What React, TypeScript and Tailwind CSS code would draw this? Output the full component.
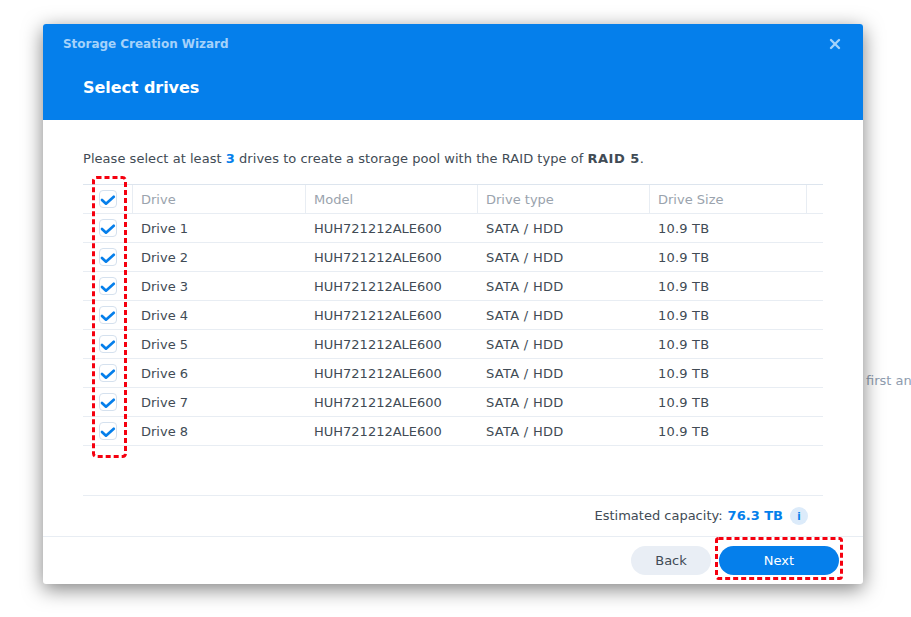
import React from "react";
import { X } from "lucide-react";

const drives = [1, 2, 3, 4, 5, 6, 7, 8];
const cols = "grid grid-cols-[50px_173px_172px_172px_157px_16px]";

const Check = () => (
  <div className="flex h-[18px] w-[18px] items-center justify-center rounded-[4px] border border-[#d5e1ee] bg-white">
    <svg width="16" height="14" viewBox="0 0 16 14" fill="none">
      <path d="M2 8 L6 11.7 L13.8 4.8" stroke="#057feb" strokeWidth="2.7" strokeLinecap="round" strokeLinejoin="round" />
    </svg>
  </div>
);

const DashedBox = ({ className, w, h, r }: { className: string; w: number; h: number; r: number }) => (
  <svg className={`absolute ${className}`} width={w} height={h}>
    <rect x="1.5" y="1.5" width={w - 3} height={h - 3} rx={r} fill="none" stroke="#f5000f" strokeWidth="3" strokeDasharray="5 3" />
  </svg>
);

export default function App() {
  return (
    <div className="relative h-[617px] w-[911px] overflow-hidden bg-white pl-[43px] pt-[24px] font-['DejaVu_Sans',sans-serif] text-[13px] text-[#414b55]">
      <span className="absolute left-[866px] top-[371px] whitespace-nowrap text-[#8e9cae]">first and</span>

      <div className="relative flex h-[560px] w-[820px] flex-col rounded-[3px] bg-white shadow-[0_5px_20px_rgba(0,0,0,0.5)]">
        <div className="h-[96px] rounded-t-[3px] bg-[#057feb] pl-[20px] pr-[20px] pt-[11px]">
          <div className="flex items-center justify-between">
            <span className="text-[12px] font-bold leading-[18px] tracking-[-0.03px] text-[#a5d2fa]">Storage Creation Wizard</span>
            <X size={16} strokeWidth={3.5} className="text-[#a5d2fa]" />
          </div>
          <h1 className="ml-[20px] mt-[23px] text-[16px] font-bold leading-[24px] tracking-[-0.07px] text-white">Select drives</h1>
        </div>

        <div className="flex flex-1 flex-col px-[40px]">
          <p className="mt-[31px] leading-[16px] tracking-[0.04px]">
            Please select at least <b className="text-[#057feb]">3</b> drives to create a storage pool with the RAID type of <b className="tracking-[0.5px]">RAID 5</b>.
          </p>

          <div className="mt-[17px] border-t border-[#dde5ee]">
            <div className={`${cols} h-[29px] items-center border-b border-[#e8edf3] text-[#9aa3ad]`}>
              <div className="flex h-full items-center border-r border-[#e8edf3] pl-[16px]"><Check /></div>
              <div className="flex h-full items-center border-r border-[#e8edf3] pl-[8px] pt-[2px]">Drive</div>
              <div className="flex h-full items-center border-r border-[#e8edf3] pl-[8px] pt-[2px]">Model</div>
              <div className="flex h-full items-center border-r border-[#e8edf3] pl-[8px] pt-[2px]">Drive type</div>
              <div className="flex h-full items-center border-r border-[#e8edf3] pl-[8px] pt-[2px]">Drive Size</div>
              <div />
            </div>
            {drives.map((n) => (
              <div key={n} className={`${cols} h-[29px] items-center border-b border-[#e8edf3]`}>
                <div className="pl-[16px]"><Check /></div>
                <div className="pl-[8px] pt-[2px]">Drive {n}</div>
                <div className="pl-[8px] pt-[2px]">HUH721212ALE600</div>
                <div className="pl-[8px] pt-[2px] tracking-[0.3px]">SATA / HDD</div>
                <div className="pl-[8px] pt-[2px] tracking-[0.2px]">10.9 TB</div>
                <div />
              </div>
            ))}
          </div>

          <div className="mt-auto flex h-[41px] items-center justify-end border-t border-[#e8edf3] pr-[15px]">
            <span>Estimated capacity:</span>
            <b className="ml-[5px] text-[#057feb]">76.3 TB</b>
            <span className="ml-[7px] flex h-[18px] w-[18px] items-center justify-center rounded-full bg-[#dcebfa] text-[10px] font-bold text-[#057feb]">i</span>
          </div>
        </div>

        <div className="flex h-[48px] items-start justify-end gap-[8px] border-t border-[#e8edf3] pr-[24px] pt-[9px]">
          <button className="h-[29px] w-[80px] rounded-full bg-[#e9eef5] text-[#414b55]">Back</button>
          <button className="h-[29px] w-[120px] rounded-full bg-[#057feb] text-white">Next</button>
        </div>

        <DashedBox className="left-[49px] top-[152px]" w={35} h={282} r={3} />
        <DashedBox className="left-[672px] top-[513px]" w={128} h={43} r={2} />
      </div>
    </div>
  );
}
